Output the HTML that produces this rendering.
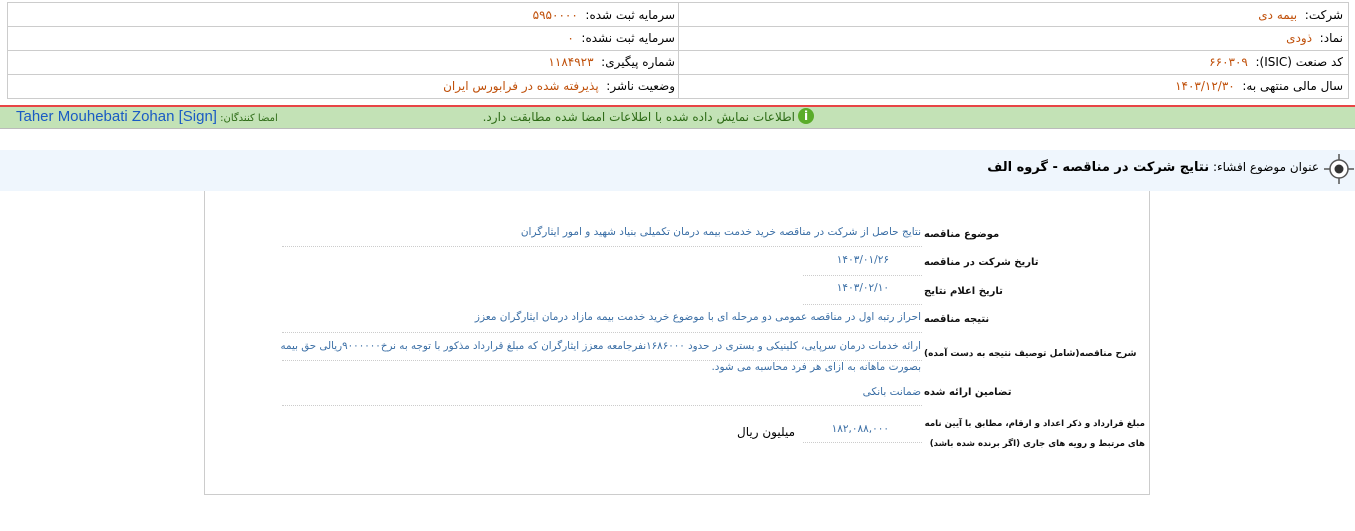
<!DOCTYPE html>
<html><head><meta charset="utf-8"><style>
body{margin:0;width:1355px;height:531px;background:#fff;font-family:Tahoma,"DejaVu Sans","Liberation Sans",sans-serif;font-size:12px;position:relative;overflow:hidden}
.a{position:absolute;white-space:nowrap;direction:rtl}
.o{color:#c0500a}
.b{color:#3a6ea5;font-size:10.5px}
.lb{font-weight:bold;color:#111;font-size:10px;direction:rtl}
.dl{position:absolute;border-top:1px dotted #ccc;height:0}
</style></head><body>
<div style="position:absolute;left:7px;top:2px;width:1340px;height:95px;border:1px solid #ccc"></div>
<div style="position:absolute;left:678px;top:2px;width:1px;height:96px;background:#ccc"></div>
<div style="position:absolute;left:7px;top:26px;width:1341px;height:1px;background:#ccc"></div>
<div style="position:absolute;left:7px;top:50px;width:1341px;height:1px;background:#ccc"></div>
<div style="position:absolute;left:7px;top:74px;width:1341px;height:1px;background:#ccc"></div>

<div class="a" style="right:12px;top:8px">شرکت: &nbsp;<span class="o">بیمه دی</span></div>
<div class="a" style="right:12px;top:31px">نماد: &nbsp;<span class="o">ذودی</span></div>
<div class="a" style="right:12px;top:55px">کد صنعت (ISIC): &nbsp;<span class="o">۶۶۰۳۰۹</span></div>
<div class="a" style="right:12px;top:79px">سال مالی منتهی به: &nbsp;<span class="o">۱۴۰۳/۱۲/۳۰</span></div>
<div class="a" style="right:680px;top:8px">سرمایه ثبت شده: &nbsp;<span class="o">۵۹۵۰۰۰۰</span></div>
<div class="a" style="right:680px;top:31px">سرمایه ثبت نشده: &nbsp;<span class="o">۰</span></div>
<div class="a" style="right:680px;top:55px">شماره پیگیری: &nbsp;<span class="o">۱۱۸۴۹۲۳</span></div>
<div class="a" style="right:680px;top:79px">وضعیت ناشر: &nbsp;<span class="o">پذیرفته شده در فرابورس ایران</span></div>

<div style="position:absolute;left:0;top:105px;width:1355px;height:2px;background:#e84545"></div>
<div style="position:absolute;left:0;top:107px;width:1355px;height:21px;background:#c3e2b6;border-bottom:1px solid #bbb"></div>
<div style="position:absolute;left:798px;top:108px;width:16px;height:16px;border-radius:50%;background:#5aac2a;color:#fff;font-size:12px;font-weight:bold;text-align:center;line-height:16px">i</div>
<div class="a" style="right:560px;top:110px;color:#2d6b16">اطلاعات نمایش داده شده با اطلاعات امضا شده مطابقت دارد.</div>
<div class="a" style="left:16px;top:108px;font-size:15px;color:#1a5bc4;direction:ltr;font-family:'Liberation Sans','DejaVu Sans',sans-serif">Taher Mouhebati Zohan [Sign]<span style="font-size:10px;color:#2d6b16;font-family:'DejaVu Sans',sans-serif"> :امضا کنندگان</span></div>

<div style="position:absolute;left:0;top:150px;width:1355px;height:41px;background:#eff6fd"></div>
<svg style="position:absolute;left:1324px;top:154px" width="30" height="30" viewBox="0 0 30 30"><circle cx="15" cy="15" r="9" fill="#fff" stroke="#555" stroke-width="1.5"/><circle cx="15" cy="15" r="4.5" fill="#333"/><path d="M15 0v6M15 24v6M0 15h6M24 15h6" stroke="#555" stroke-width="1.5"/></svg>
<div class="a" style="right:36px;top:160px;font-size:12px">عنوان موضوع افشاء: <b style="font-size:13px">نتایج شرکت در مناقصه - گروه الف</b></div>

<div style="position:absolute;left:204px;top:191px;width:944px;height:303px;border:1px solid #ccc;border-top:none"></div>

<div class="a lb" style="left:924px;top:229px">موضوع مناقصه</div>
<div class="a b" style="right:434px;top:226px">نتایج حاصل از شرکت در مناقصه خرید خدمت بیمه درمان تکمیلی بنیاد شهید و امور ایثارگران</div>
<div class="dl" style="left:282px;width:640px;top:246px"></div>
<div class="a lb" style="left:924px;top:257px">تاریخ شرکت در مناقصه</div>
<div class="a b" style="right:466px;top:254px">۱۴۰۳/۰۱/۲۶</div>
<div class="dl" style="left:803px;width:119px;top:275px"></div>
<div class="a lb" style="left:924px;top:286px">تاریخ اعلام نتایج</div>
<div class="a b" style="right:466px;top:282px">۱۴۰۳/۰۲/۱۰</div>
<div class="dl" style="left:803px;width:119px;top:304px"></div>
<div class="a lb" style="left:924px;top:314px">نتیجه مناقصه</div>
<div class="a b" style="right:434px;top:311px">احراز رتبه اول در مناقصه عمومی دو مرحله ای با موضوع خرید خدمت بیمه مازاد درمان ایثارگران معزز</div>
<div class="dl" style="left:282px;width:640px;top:332px"></div>
<div class="a lb" style="left:924px;top:349px;font-size:9px">شرح مناقصه(شامل توصیف نتیجه به دست آمده)</div>
<div class="a b" style="right:434px;top:340px;font-size:10.3px">ارائه خدمات درمان سرپایی، کلینیکی و بستری در حدود ۱۶۸۶۰۰۰نفرجامعه معزز ایثارگران که مبلغ قرارداد مذکور با توجه به نرخ۹۰۰۰۰۰۰ریالی حق بیمه</div>
<div class="dl" style="left:282px;width:640px;top:360px"></div>
<div class="a b" style="right:434px;top:361px">بصورت ماهانه به ازای هر فرد محاسبه می شود.</div>
<div class="a lb" style="left:924px;top:387px">تضامین ارائه شده</div>
<div class="a b" style="right:434px;top:386px">ضمانت بانکی</div>
<div class="dl" style="left:282px;width:640px;top:405px"></div>
<div class="a lb" style="left:924px;width:221px;text-align:right;top:414px;line-height:20px;font-size:8.6px">مبلغ قرارداد و ذکر اعداد و ارقام، مطابق با آیین نامه<br>های مرتبط و رویه های جاری (اگر برنده شده باشد)</div>
<div class="a b" style="right:466px;top:423px">۱۸۲,۰۸۸,۰۰۰</div>
<div class="a" style="right:560px;top:425px">میلیون ریال</div>
<div class="dl" style="left:803px;width:119px;top:442px"></div>
</body></html>
